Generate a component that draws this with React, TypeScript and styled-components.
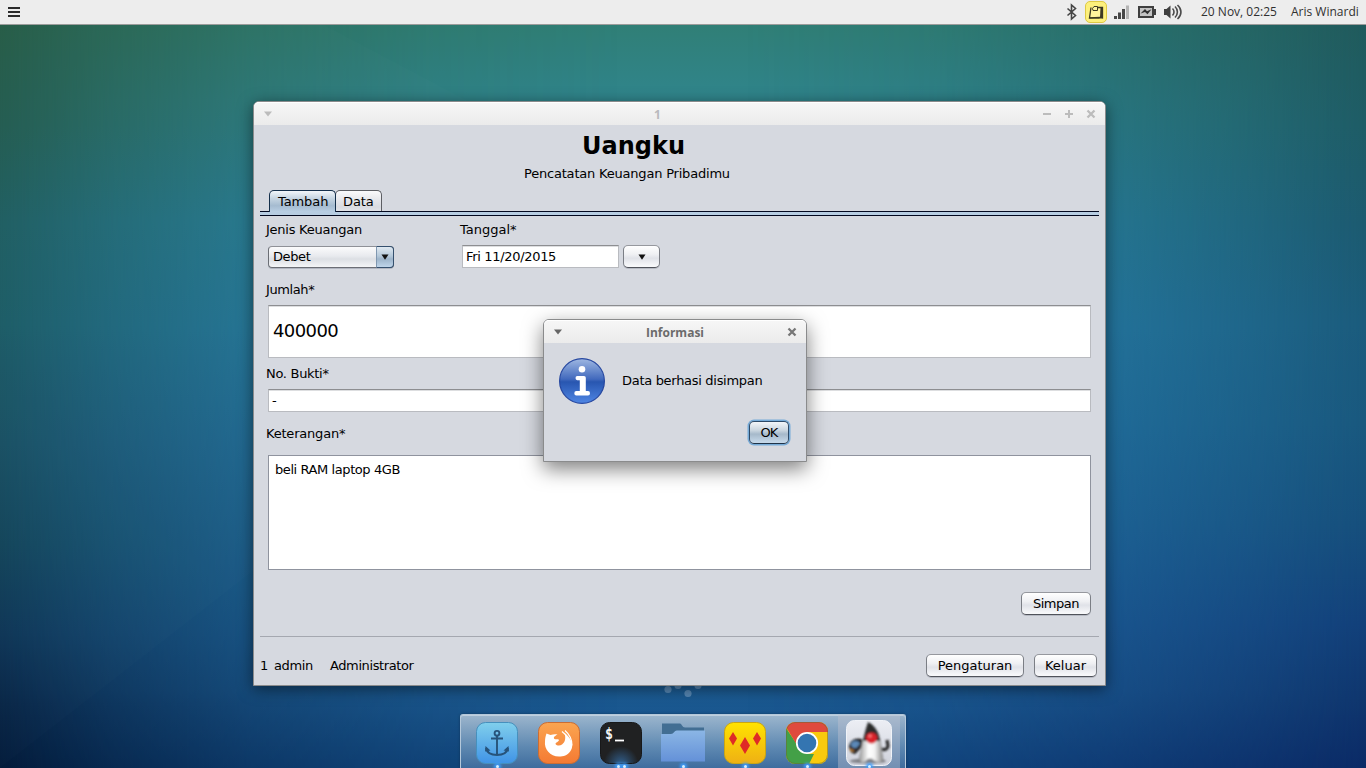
import React from 'react';
import styled, { createGlobalStyle, css } from 'styled-components';

const GlobalStyle = createGlobalStyle`
  *, *::before, *::after { box-sizing: border-box; }
  html, body { margin: 0; padding: 0; }
  body { overflow: hidden; }
`;

const Desktop = styled.div`
  position: relative;
  isolation: isolate;
  display: flex;
  flex-direction: column;
  justify-content: space-between;
  width: 1366px;
  height: 768px;
  overflow: hidden;
  font: 13px/16px 'DejaVu Sans', sans-serif;
  color: #000;
  background: linear-gradient(#307f76 24px, #30858c 100px, #2b86a4 220px, #2880ac 330px, #2476a8 430px, #2069a0 560px, #1c5c94 690px, #124880 768px);
  &::before, &::after {
    content: '';
    position: absolute;
    inset: 0;
    z-index: -1;
  }
  &::before {
    background: linear-gradient(#265c46 24px, #235c50 124px, #1f5e62 224px, #1c5c66 324px, #194f63 444px, #13445a 544px, #0e3556 634px, #082545 705px, #031b3a 768px);
    mask-image: linear-gradient(90deg, #000 0, rgba(0,0,0,.68) 110px, rgba(0,0,0,.36) 250px, rgba(0,0,0,.12) 430px, transparent 620px);
  }
  &::after {
    background: linear-gradient(#205a5c 24px, #1e5c66 124px, #1c5a70 224px, #1b5b7c 324px, #19587e 424px, #164f7c 524px, #12407a 624px, #0f366e 700px, #0b2a66 768px);
    mask-image: linear-gradient(270deg, #000 0, rgba(0,0,0,.7) 120px, rgba(0,0,0,.42) 255px, rgba(0,0,0,.15) 430px, transparent 620px);
  }
`;

const Wallpaper = styled.svg`
  position: absolute;
  inset: 0;
  z-index: -1;
`;

const TopPanel = styled.header`
  display: flex;
  align-items: center;
  height: 25px;
  padding: 0 7px 0 8px;
  background: #ededed;
  border-bottom: 1px solid #9b9c9b;
  font: 12px/24px 'Open Sans', 'Noto Sans', sans-serif;
  color: #303030;
`;

const Indicators = styled.div`
  display: flex;
  align-items: center;
  margin-left: auto;
  height: 24px;
  svg { display: block; }
`;

const PanelText = styled.span<{ $left: number; $width: number }>`
  margin-left: ${p => p.$left}px;
  width: ${p => p.$width}px;
  white-space: nowrap;
`;

const frame = css`
  position: absolute;
  display: flex;
  flex-direction: column;
  background: #d6d9e0;
  border: 1px solid #8a8b8c;
`;

const MainWindow = styled.main`
  ${frame}
  left: 253px;
  top: 101px;
  width: 853px;
  height: 585px;
  border-radius: 6px 6px 0 0;
  box-shadow: 0 3px 15px rgba(0, 0, 0, 0.5);
`;

const Dialog = styled.section`
  ${frame}
  left: 543px;
  top: 319px;
  width: 264px;
  height: 143px;
  border-radius: 6px 6px 0 0;
  box-shadow: 0 7px 20px rgba(0, 0, 0, 0.5);
`;

const TitleBar = styled.div<{ $muted?: boolean }>`
  display: flex;
  align-items: center;
  justify-content: space-between;
  flex: none;
  height: 23px;
  padding: 0 9px;
  border-radius: 5px 5px 0 0;
  background: linear-gradient(#f7f7f7, #ebebeb);
  box-shadow: inset 0 1px #fff;
  font: bold 12px/23px 'Open Sans', 'Noto Sans', sans-serif;
  color: ${p => (p.$muted ? '#b9babd' : '#6b6b6b')};
  svg { display: block; }
`;

const TitleSlot = styled.div<{ $end?: boolean; $width?: number }>`
  display: flex;
  width: ${p => p.$width ?? 56}px;
  gap: 12px;
  justify-content: ${p => (p.$end ? 'flex-end' : 'flex-start')};
`;

const TitleText = styled.span`
  padding-top: 2px;
  line-height: 22px;
`;

const Heading = styled.div`
  height: 65px;
  padding-top: 6px;
`;

const AppTitle = styled.h1`
  margin: 0 0 0 328px;
  font-size: 24px;
  line-height: 30px;
`;

const Subtitle = styled.p`
  margin: 5px 0 0 270px;
  letter-spacing: -0.2px;
`;

const Tabs = styled.div`
  display: flex;
  margin: 0 6px;
  padding-left: 9px;
  height: 21px;
`;

const Tab = styled.div<{ $active?: boolean; $width: number }>`
  position: relative;
  z-index: ${p => (p.$active ? 1 : 0)};
  width: ${p => p.$width}px;
  height: ${p => (p.$active ? 22 : 21)}px;
  margin-right: -1px;
  padding: 3px 0 0 ${p => (p.$active ? 8 : 7)}px;
  letter-spacing: -0.1px;
  border: 1px solid ${p => (p.$active ? '#142f4b' : '#5c5e63')};
  border-bottom: 0;
  border-radius: 5px 5px 0 0;
  background: ${p =>
    p.$active
      ? 'linear-gradient(#f2f6fa, #c6d5e2 35%, #a5bbd0 70%, #b9cfe4)'
      : 'linear-gradient(#fafafb, #e6e7eb 45%, #d9dbe1 80%, #e2e4e9)'};
`;

const TabRule = styled.div`
  flex: none;
  height: 5px;
  margin: 0 6px;
  border: solid #02081f;
  border-width: 1px 0;
  background: #b7cde2;
`;

const Form = styled.div`
  display: flex;
  flex-direction: column;
  height: 421px;
  margin: 0 6px;
  padding: 6px 8px 0;
  border-bottom: 1px solid #a5a8b0;
`;

const Label = styled.label<{ $ls?: number; $top?: number }>`
  display: block;
  height: 16px;
  margin: ${p => p.$top ?? 0}px 0 0 -2px;
  white-space: nowrap;
  letter-spacing: ${p => p.$ls ?? 0}px;
`;

const Row = styled.div`
  display: flex;
`;

const Column = styled.div<{ $width?: number }>`
  width: ${p => (p.$width ? `${p.$width}px` : 'auto')};
`;

const ComboBox = styled.div`
  display: flex;
  justify-content: space-between;
  width: 126px;
  height: 22px;
  margin-top: 8px;
  padding-left: 4px;
  line-height: 20px;
  letter-spacing: -0.4px;
  border: 1px solid #6b6e75;
  border-top-color: #8f9197;
  border-radius: 4px;
  background: linear-gradient(#fbfbfc, #e8eaee 45%, #dcdfe4 60%, #f4f5f7);
  box-shadow: 0 1px rgba(70, 80, 100, 0.25);
`;

const ComboArrow = styled.div`
  display: grid;
  place-items: center;
  width: 18px;
  margin: -1px;
  border: 1px solid #35506e;
  border-left-color: #7f97b0;
  border-radius: 0 4px 4px 0;
  background: linear-gradient(#e0e9f1, #b4c8da 45%, #9db4ca 60%, #bfd5ea);
`;

const DateRow = styled.div`
  display: flex;
  gap: 4px;
  margin-top: 7px;
`;

const Field = styled.div<{ $width?: number; $top?: number }>`
  display: flex;
  align-items: center;
  width: ${p => (p.$width ? `${p.$width}px` : '100%')};
  height: 23px;
  margin-top: ${p => p.$top ?? 0}px;
  padding: 1px 0 0 3px;
  letter-spacing: -0.32px;
  border: 1px solid #b9bbc0;
  border-top-color: #8d8e91;
  background: #fff;
  box-shadow: inset 0 1px #dddee0;
`;

const AmountField = styled(Field)`
  height: 53px;
  padding: 0 0 1px 4px;
  font-size: 18px;
  letter-spacing: -0.6px;
`;

const TextArea = styled.div`
  height: 115px;
  margin-top: 13px;
  padding: 6px 0 0 6px;
  letter-spacing: -0.42px;
  border: 1px solid #8f939e;
  background: #fff;
`;

const Button = styled.button<{ $width: number; $focus?: boolean; $ls?: number }>`
  display: grid;
  place-items: center;
  width: ${p => p.$width}px;
  height: 23px;
  padding: 0;
  font: inherit;
  letter-spacing: ${p => p.$ls ?? 0}px;
  color: inherit;
  border: 1px solid #7b7e85;
  border-top-color: #96989e;
  border-bottom-color: #50535b;
  border-radius: 5px;
  background: linear-gradient(#ffffff, #eff0f3 40%, #e0e2e8 58%, #f7f8fa 95%);
  box-shadow: 0 1px rgba(110, 115, 130, 0.3);
  ${p =>
    p.$focus &&
    css`
      border-color: #2d4a68 #2d4a68 #1f3348;
      background: linear-gradient(#f3f6f9, #c9d5df 40%, #a6b9ca 58%, #c4d7e8 95%);
      box-shadow: 0 0 0 1.5px #76abd8;
    `}
`;

const Submit = styled.div`
  display: flex;
  justify-content: flex-end;
  margin-top: 22px;
`;

const Footer = styled.footer`
  display: flex;
  padding: 17px 8px 0 6px;
`;

const FooterText = styled.span<{ $width: number }>`
  width: ${p => p.$width}px;
  padding-top: 4px;
  letter-spacing: -0.4px;
`;

const FooterButtons = styled.div`
  display: flex;
  gap: 10px;
  margin-left: auto;
`;

const Message = styled.div`
  display: flex;
  align-items: center;
  gap: 17px;
  margin: 15px 0 0 15px;
  letter-spacing: -0.3px;
  svg { display: block; }
`;

const DialogActions = styled.div`
  display: flex;
  justify-content: flex-end;
  padding: 17px 17px 0 0;
`;

const Dock = styled.nav`
  display: flex;
  width: 446px;
  height: 54px;
  margin-left: 460px;
  padding-left: 5px;
  border: 1px solid #b4c8da;
  border-width: 1px 1px 0;
  border-radius: 3px 3px 0 0;
  background: linear-gradient(rgba(178, 198, 216, 0.86), rgba(118, 156, 192, 0.76) 60%, rgba(74, 118, 166, 0.8));
  box-shadow: inset 0 1px rgba(255, 255, 255, 0.35), 0 0 3px rgba(0, 0, 0, 0.3);
`;

const DockItem = styled.div<{ $current?: boolean }>`
  position: relative;
  width: 62px;
  height: 53px;
  padding-top: 3px;
  background: ${p => (p.$current ? 'rgba(190, 192, 208, 0.42)' : 'none')};
  svg { display: block; }
`;

const RunningLights = styled.div`
  position: absolute;
  left: 0;
  right: 0;
  bottom: 0;
  display: flex;
  justify-content: center;
  gap: 3px;
`;

const Light = styled.i`
  width: 3px;
  height: 3px;
  border-radius: 2px;
  background: #d8f0ff;
  box-shadow: 0 0 3px 2px #3f9dfb;
`;

const Arrow = () => (
  <svg width="8" height="8" viewBox="0 0 8 8"><path d="M.5 1.500h7L4 6.700z" fill="#111" /></svg>
);

const MenuArrow = ({ color }: { color: string }) => (
  <svg width="10" height="8" viewBox="0 0 10 8"><path d="M1 1.500h8L5 6.500z" fill={color} /></svg>
);

const CloseMark = ({ color }: { color: string }) => (
  <svg width="10" height="10" viewBox="0 0 10 10"><path d="M1.500 1.500l7 7M8.500 1.500l-7 7" stroke={color} strokeWidth="2.3" /></svg>
);

const PlateShape = ({ fill, stroke }: { fill: string; stroke: string }) => (
  <rect x="10.5" y="4.5" width="41" height="41" rx="9" fill={fill} stroke={stroke} />
);

function StatusIcons() {
  return (
    <svg width="122" height="24" viewBox="1064 0 122 24">
      <path d="M1067.500 8.500l8 7-4 3.500V5l4 3.500-8 7" fill="none" stroke="#454545" strokeWidth="1.600" />
      <rect x="1085.500" y="1.500" width="21" height="21" rx="4.500" fill="#fdf07c" stroke="#dfc944" />
      <path d="M1091 7.500l-1.500 10.500 10.500-.5 2.500.5V7.500h-5" fill="#fff39b" stroke="#3c3822" strokeWidth="1.300" />
      <path d="M1100.500 7.500h2v10.500l-2.500-.5z" fill="#3c3822" />
      <path d="M1092.500 8.500l1.500-2h3.500v4h-4.500zM1089.500 18h10" fill="#fff39b" stroke="#3c3822" />
      <g fill="#474747">
        <rect x="1114" y="16" width="3" height="3" />
        <rect x="1118" y="12.500" width="3" height="6.500" />
        <rect x="1122" y="9" width="3" height="10" />
        <rect x="1126" y="5.500" width="3" height="13.500" fill="#b4b4b4" />
      </g>
      <rect x="1139" y="7" width="14" height="10" fill="#c4c4c4" stroke="#3f3f3f" strokeWidth="2" />
      <path d="M1154 9h2v6h-2z" fill="#3f3f3f" />
      <path d="M1140.500 13.500l4.500-4.500 2 2.300 4.500-2-4 5-2.500-2.300z" fill="#2f2f2f" />
      <path d="M1164 9h2.500l4-3.500v13l-4-3.500h-2.500z" fill="#3f3f3f" />
      <path d="M1172.500 8.500c2 2 2 5 0 7M1175 6.500c3.200 3 3.200 8 0 11M1177.500 5c4.600 4 4.600 10 0 14" fill="none" stroke="#4b4b4b" strokeWidth="1.600" />
    </svg>
  );
}

function InfoIcon() {
  return (
    <svg width="46" height="46" viewBox="0 0 46 46">
      <defs>
        <linearGradient id="info" x1="0" y1="0" x2="0" y2="1">
          <stop offset="0" stopColor="#9fb8e2" />
          <stop offset=".46" stopColor="#4169bd" />
          <stop offset=".52" stopColor="#2856b0" />
          <stop offset="1" stopColor="#4f86e4" />
        </linearGradient>
      </defs>
      <circle cx="23" cy="23" r="22.400" fill="url(#info)" stroke="#2748a0" strokeWidth="1.200" />
      <circle cx="23" cy="11.300" r="3.300" fill="#fff" />
      <path d="M18.300 18h6.700q1.800 0 1.800 1.800V33h2.200q2 0 2 2.200t-2 2.200H17.300q-2 0-2-2.200t2-2.200h3.500V22.200h-2.500q-1.800 0-1.800-2.100t1.800-2.100z" fill="#fff" />
    </svg>
  );
}

function AnchorIcon() {
  return (
    <svg width="62" height="50" viewBox="0 0 62 50">
      <defs><linearGradient id="sea" x1="0" y1="0" x2="0" y2="1"><stop stopColor="#80cfec" /><stop offset="1" stopColor="#4093e6" /></linearGradient></defs>
      <PlateShape fill="url(#sea)" stroke="#4690bd" />
      <g fill="none" stroke="#27537a" strokeWidth="1.900">
        <circle cx="31" cy="15.300" r="2.400" />
        <path d="M31 18v19M25 20.500h12M20 30c1 5 6 7 11 7s10-2 11-7" />
      </g>
      <path d="M19.500 28l5 4.500-5.500 1zM42.500 28l-5 4.500 5.500 1z" fill="#27537a" />
    </svg>
  );
}

function FirefoxIcon() {
  return (
    <svg width="62" height="50" viewBox="0 0 62 50">
      <defs><linearGradient id="fox" x1="0" y1="0" x2="0" y2="1"><stop stopColor="#fba550" /><stop offset="1" stopColor="#f47a33" /></linearGradient></defs>
      <PlateShape fill="url(#fox)" stroke="#cb6d33" />
      <path d="M18.500 15.500l4 1.500c3-1 5-1 7-.5-3 1.500-4.500 3-3 4.500 2 1 4-.5 4.500 1-.5 2-3.500 2.500-3.500 4 1.500 2 4.500 2 6.500.5 3-2 4.500-7 2-12 7 5 10.500 13 6.500 18.500-3 4.500-7 5.500-11.500 5.500-9 0-15-7.500-14-15 0-3 .5-5 1.500-8z" fill="#fff" />
      <path d="M37 12.500c4 3.500 7 9 7 15M34 13.500c4 3 7 8 8 13" fill="none" stroke="#fff" strokeWidth="1.200" />
    </svg>
  );
}

const Prompt = styled.text`
  font: bold 15px 'DejaVu Sans Mono', monospace;
  fill: #f4f4f4;
`;

function TerminalIcon() {
  return (
    <svg width="62" height="50" viewBox="0 0 62 50">
      <defs><radialGradient id="glow" cx=".5" cy="1" r=".42"><stop stopColor="#315e8b" /><stop offset="1" stopColor="#202122" /></radialGradient></defs>
      <PlateShape fill="url(#glow)" stroke="#171819" />
      <Prompt x="15" y="20.500" textLength="8" lengthAdjust="spacingAndGlyphs">$</Prompt>
      <path d="M25 22.500h9" stroke="#fff" strokeWidth="1.800" />
    </svg>
  );
}

function FolderIcon() {
  return (
    <svg width="62" height="50" viewBox="0 0 62 50">
      <defs><linearGradient id="folder" x1="0" y1="0" x2="0" y2="1"><stop stopColor="#8bb6e5" /><stop offset="1" stopColor="#6491d8" /></linearGradient></defs>
      <path d="M10 5.500h18q1 0 2 2t3 2h19V17H10z" fill="#426e93" />
      <path d="M9 16h10q2 0 3-1.800t3-1.700h28v31H9z" fill="url(#folder)" />
    </svg>
  );
}

function DiamondsIcon() {
  return (
    <svg width="62" height="50" viewBox="0 0 62 50">
      <defs><linearGradient id="gold" x1="0" y1="0" x2="0" y2="1"><stop stopColor="#ffe300" /><stop offset="1" stopColor="#efb014" /></linearGradient></defs>
      <PlateShape fill="url(#gold)" stroke="#caa513" />
      <path d="M19 14l4 6.500-4 7-4-7zM43 14l4 6.500-4 7-4-7zM31 19l5 8.500-5 8.500-5-8.500z" fill="#df2b26" />
    </svg>
  );
}

function ChromeIcon() {
  return (
    <svg width="62" height="50" viewBox="0 0 62 50">
      <defs><clipPath id="plate"><rect x="10" y="4" width="42" height="42" rx="9" /></clipPath></defs>
      <g clipPath="url(#plate)">
        <path d="M10 4h42v42H10z" fill="#f9ca0d" />
        <path d="M10 10l12 18 9 8 7 0-5 10H10z" fill="#43a047" />
        <path d="M10 4h42v10H31v14l-10-1L10 9z" fill="#df4a3d" />
      </g>
      <rect x="10.500" y="4.500" width="41" height="41" rx="9" fill="none" stroke="#6e6832" strokeOpacity=".5" />
      <circle cx="31" cy="25" r="10.200" fill="#3475b1" stroke="#fff" strokeWidth="1.800" />
    </svg>
  );
}

function DukeIcon() {
  return (
    <svg width="62" height="50" viewBox="0 0 62 50">
      <defs>
        <linearGradient id="body" x1="0" y1="0" x2="1" y2="0"><stop stopColor="#999" /><stop offset=".4" stopColor="#fff" /><stop offset=".65" stopColor="#f4f4f4" /><stop offset="1" stopColor="#888" /></linearGradient>
        <linearGradient id="tile" x1="0" y1="0" x2="0" y2="1"><stop stopColor="#eceef4" /><stop offset="1" stopColor="#cfd2dc" /></linearGradient>
        <filter id="soft"><feGaussianBlur stdDeviation=".8" /></filter>
      </defs>
      <rect x="8.500" y="2.500" width="45" height="45" rx="8" fill="url(#tile)" stroke="#f0f3f8" />
      <g filter="url(#soft)">
        <ellipse cx="30" cy="43" rx="18" ry="2.500" fill="#7f8086" />
        <path d="M11 28c1-6 7-9 13-7l1 7-8 8q-6-1-6-8z" fill="#222" />
        <ellipse cx="17.500" cy="26.500" rx="4.500" ry="3.500" fill="#5b88b7" />
        <path d="M12 31q4 4 8 0" fill="none" stroke="#b77a35" strokeWidth="1.800" />
        <path d="M43 31q6 2 7-3l-1-6M23 27l-7 8" fill="none" stroke="#2c2c2c" strokeWidth="3.200" />
        <path d="M25 21l-4 21c3 5 7 2 9-1h4c4 4 9 5 11 1l-3-21z" fill="url(#body)" stroke="#777" strokeWidth=".6" />
        <path d="M30 4c6 3 11 9 12 19H25c1-6 3-13 5-19z" fill="#292a2b" />
        <circle cx="33.500" cy="20" r="5.600" fill="#d9202a" />
        <circle cx="32" cy="18" r="1.800" fill="#f77" />
      </g>
    </svg>
  );
}

const dockItems = [
  { name: 'anchor', icon: <AnchorIcon />, lights: 1 },
  { name: 'firefox', icon: <FirefoxIcon />, lights: 0 },
  { name: 'terminal', icon: <TerminalIcon />, lights: 2 },
  { name: 'files', icon: <FolderIcon />, lights: 1 },
  { name: 'diamonds', icon: <DiamondsIcon />, lights: 1 },
  { name: 'chrome', icon: <ChromeIcon />, lights: 1 },
  { name: 'duke', icon: <DukeIcon />, lights: 1, current: true },
];

export default function App() {
  return (
    <Desktop>
      <GlobalStyle />
      <Wallpaper width="1366" height="768">
        <path d="M0 24h322L470 102v300L0 768z" fill="#fff" fillOpacity=".012" />
        <g fill="#a9c6e2" fillOpacity=".42">
          <circle cx="668" cy="689.500" r="3.600" />
          <circle cx="678" cy="685.500" r="3.600" />
          <circle cx="688" cy="693.500" r="3.600" />
          <circle cx="698" cy="685.500" r="3.600" />
        </g>
      </Wallpaper>

      <TopPanel>
        <svg width="12" height="12" viewBox="0 0 12 12"><path d="M0 2h12M0 6h12M0 10h12" stroke="#2b2b2b" strokeWidth="2" /></svg>
        <Indicators><StatusIcons /></Indicators>
        <PanelText $left={15} $width={76}>20 Nov, 02:25</PanelText>
        <PanelText $left={14} $width={68}>Aris Winardi</PanelText>
      </TopPanel>

      <MainWindow>
        <TitleBar $muted>
          <TitleSlot $width={12}><MenuArrow color="#bcbcbc" /></TitleSlot>
          <TitleText>1</TitleText>
          <TitleSlot $end>
            <svg width="10" height="10" viewBox="0 0 10 10"><path d="M1 5h8" stroke="#bcbcbc" strokeWidth="2" /></svg>
            <svg width="10" height="10" viewBox="0 0 10 10"><path d="M1 5h8M5 1v8" stroke="#bcbcbc" strokeWidth="2" /></svg>
            <CloseMark color="#bcbcbc" />
          </TitleSlot>
        </TitleBar>
        <Heading>
          <AppTitle>Uangku</AppTitle>
          <Subtitle>Pencatatan Keuangan Pribadimu</Subtitle>
        </Heading>
        <Tabs>
          <Tab $active $width={67}>Tambah</Tab>
          <Tab $width={47}>Data</Tab>
        </Tabs>
        <TabRule />
        <Form>
          <Row>
            <Column $width={194}>
              <Label $ls={-0.25}>Jenis Keuangan</Label>
              <ComboBox>Debet<ComboArrow><Arrow /></ComboArrow></ComboBox>
            </Column>
            <Column>
              <Label>Tanggal*</Label>
              <DateRow>
                <Field $width={157}>Fri 11/20/2015</Field>
                <Button $width={37}><Arrow /></Button>
              </DateRow>
            </Column>
          </Row>
          <Label $top={14} $ls={-0.4}>Jumlah*</Label>
          <AmountField $top={7}>400000</AmountField>
          <Label $top={8} $ls={-0.3}>No. Bukti*</Label>
          <Field $top={7}>-</Field>
          <Label $top={14} $ls={-0.2}>Keterangan*</Label>
          <TextArea>beli RAM laptop 4GB</TextArea>
          <Submit><Button $width={70} $ls={-0.5}>Simpan</Button></Submit>
        </Form>
        <Footer>
          <FooterText $width={14}>1</FooterText>
          <FooterText $width={56}>admin</FooterText>
          <FooterText $width={90}>Administrator</FooterText>
          <FooterButtons>
            <Button $width={98}>Pengaturan</Button>
            <Button $width={63}>Keluar</Button>
          </FooterButtons>
        </Footer>
      </MainWindow>

      <Dialog>
        <TitleBar>
          <TitleSlot><MenuArrow color="#666" /></TitleSlot>
          <TitleText>Informasi</TitleText>
          <TitleSlot $end><CloseMark color="#777" /></TitleSlot>
        </TitleBar>
        <Message><InfoIcon />Data berhasi disimpan</Message>
        <DialogActions><Button $width={40} $focus $ls={-0.9}>OK</Button></DialogActions>
      </Dialog>

      <Dock>
        {dockItems.map(item => (
          <DockItem key={item.name} $current={item.current}>
            {item.icon}
            <RunningLights>
              {Array.from({ length: item.lights }, (_, i) => <Light key={i} />)}
            </RunningLights>
          </DockItem>
        ))}
      </Dock>
    </Desktop>
  );
}
